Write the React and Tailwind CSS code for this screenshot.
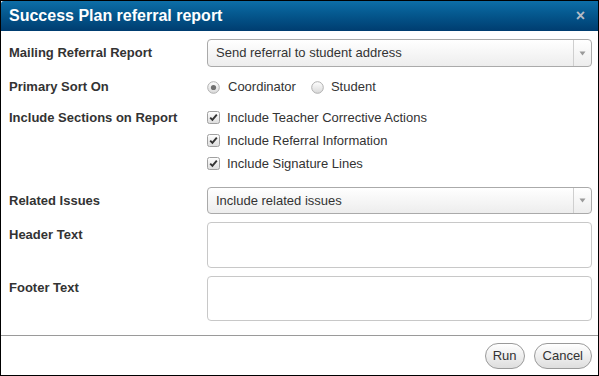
import React from 'react'

const font = { fontFamily: '"Liberation Sans", Arial, sans-serif' }

const Checkbox = () => (
	<svg width="13" height="13" viewBox="0 0 13 13" className="shrink-0">
		<defs>
			<linearGradient id="cbg" x1="0" y1="0" x2="0" y2="1">
				<stop offset="0" stopColor="#ffffff" />
				<stop offset="1" stopColor="#dcdcdc" />
			</linearGradient>
		</defs>
		<rect x="0.5" y="0.5" width="12" height="12" rx="2" fill="url(#cbg)" stroke="#a0a0a0" />
		<path d="M3.2 6.6 L5.4 8.9 L9.8 3.6" fill="none" stroke="#333" strokeWidth="1.9" />
	</svg>
)

const Radio = ({ checked }) => (
	<svg width="13" height="13" viewBox="0 0 13 13" className="shrink-0">
		<defs>
			<linearGradient id="rbg" x1="0" y1="0" x2="0" y2="1">
				<stop offset="0" stopColor="#ffffff" />
				<stop offset="1" stopColor="#d8d8d8" />
			</linearGradient>
		</defs>
		<circle cx="6.5" cy="6.5" r="5.8" fill="url(#rbg)" stroke="#b0b0b0" />
		{checked && <circle cx="6.5" cy="6.5" r="2.6" fill="#707070" />}
	</svg>
)

const Select = ({ value, className }) => (
	<div className={`flex items-stretch rounded-[4px] border border-[#aaaaaa] bg-gradient-to-b from-white to-[#ededed] ${className}`}>
		<div className="flex-1 flex items-center pl-[8px] text-[13px] text-[#333]">{value}</div>
		<div className="w-[18px] border-l border-[#cfcfcf] flex items-center justify-center">
			<svg width="7" height="5" viewBox="0 0 7 5">
				<path d="M0.5 0.5 L6.5 0.5 L3.5 4.5 Z" fill="#9a9a9a" />
			</svg>
		</div>
	</div>
)

const Label = ({ children, className = '' }) => (
	<div className={`w-[198px] shrink-0 text-[13px] font-bold text-[#333] ${className}`}>{children}</div>
)

export default function App() {
	const sections = [
		'Include Teacher Corrective Actions',
		'Include Referral Information',
		'Include Signature Lines',
	]

	return (
		<div style={font} className="w-[599px] h-[376px] border border-black bg-white flex flex-col overflow-hidden">
			{/* Title bar */}
			<div className="h-[30px] shrink-0 rounded-tl-[3px] bg-gradient-to-b from-[#0d6ea7] to-[#003d70] flex items-center justify-between pl-[8px] pr-[13px]">
				<div className="text-white font-bold text-[16px]">Success Plan referral report</div>
				<div className="text-[#b4bcc6] font-bold text-[16px] leading-none">×</div>
			</div>

			{/* Form */}
			<div className="flex-1 pl-[8px] pr-[6px]">
				<div className="flex mt-[8px] h-[28px] items-center">
					<Label>Mailing Referral Report</Label>
					<Select value="Send referral to student address" className="flex-1 h-[28px]" />
				</div>

				<div className="flex mt-[10px] h-[20px] items-center">
					<Label>Primary Sort On</Label>
					<div className="flex items-center text-[13px] text-[#333]">
						<Radio checked />
						<span className="ml-[8px]">Coordinator</span>
						<span className="ml-[15px]"><Radio /></span>
						<span className="ml-[7px]">Student</span>
					</div>
				</div>

				<div className="flex mt-[9px]">
					<Label className="h-[23px] leading-[23px]">Include Sections on Report</Label>
					<div className="flex flex-col">
						{sections.map((s) => (
							<div key={s} className="flex items-center h-[23px] text-[13px] text-[#333]">
								<Checkbox />
								<span className="ml-[7px]">{s}</span>
							</div>
						))}
					</div>
				</div>

				<div className="flex mt-[12px] h-[27px] items-center">
					<Label>Related Issues</Label>
					<Select value="Include related issues" className="flex-1 h-[27px]" />
				</div>

				<div className="flex mt-[8px]">
					<Label className="h-[26px] leading-[26px]">Header Text</Label>
					<div className="flex-1 h-[46px] rounded-[4px] border border-[#c8c8c8]" />
				</div>

				<div className="flex mt-[8px]">
					<Label className="h-[24px] leading-[24px]">Footer Text</Label>
					<div className="flex-1 h-[45px] rounded-[4px] border border-[#c8c8c8]" />
				</div>
			</div>

			{/* Footer */}
			<div className="h-[40px] shrink-0 border-t border-[#9a9a9a] flex items-center justify-end gap-[9px] pr-[6px]">
				<button className="h-[26px] px-[7px] rounded-full border border-[#9a9a9a] bg-gradient-to-b from-white to-[#dedede] text-[13px] text-[#333]">Run</button>
				<button className="h-[26px] px-[8px] rounded-full border border-[#9a9a9a] bg-gradient-to-b from-white to-[#dedede] text-[13px] text-[#333]">Cancel</button>
			</div>
		</div>
	)
}
